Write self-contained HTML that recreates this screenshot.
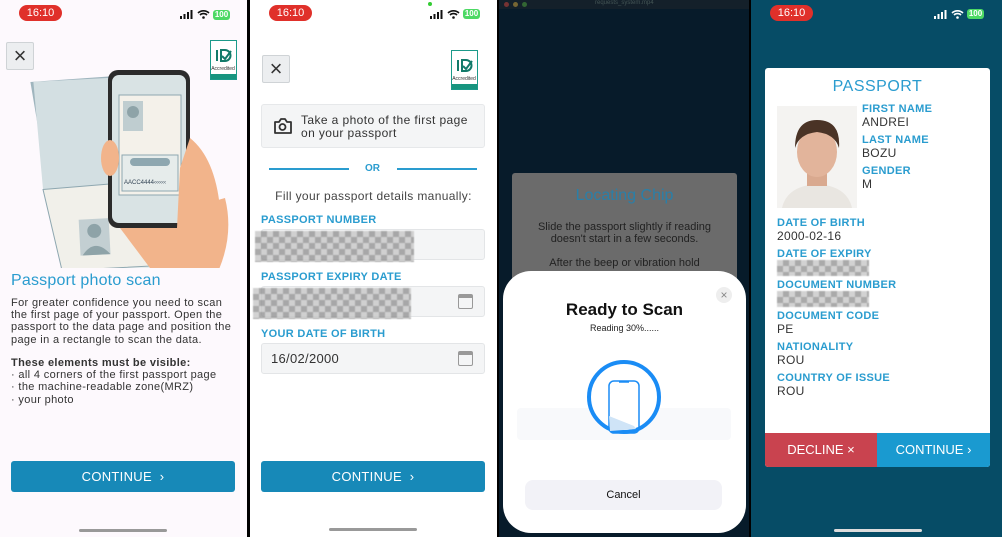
<!DOCTYPE html>
<html><head><meta charset="utf-8"><style>
*{margin:0;padding:0;box-sizing:border-box}
body{width:1002px;height:537px;overflow:hidden;background:#000;font-family:"Liberation Sans",sans-serif;position:relative}
.a{position:absolute}
.p{position:absolute;top:0;height:537px;overflow:hidden}
.time{position:absolute;left:19px;top:5px;width:43px;height:16px;border-radius:8px;background:#e0302a;color:#fff;font-size:11px;text-align:center;line-height:16px}
.bat{position:absolute;width:17px;height:10px;border-radius:3px;background:#4cd964;color:#fff;font-size:8px;font-weight:bold;text-align:center;line-height:10px}
.xbtn{position:absolute;width:28px;height:28px;background:#eceef0;border:1px solid #cfd3d6;border-radius:2px;font-size:22px;line-height:25px;text-align:center;color:#333}
.logo{position:absolute;width:27px;height:40px;border:1px solid #1b9a8a;background:#fff}
.logo .g{position:absolute;left:0;right:0;bottom:0;height:5px;background:#16957f}
.btn{position:absolute;height:31px;border-radius:3px;background:#1789b8;color:#fff;font-size:13px;text-align:center;line-height:31px;letter-spacing:.3px}
.home{position:absolute;width:88px;height:3px;border-radius:2px;background:#999}
.lbl{position:absolute;color:#2a9ccf;font-size:11px;font-weight:bold;letter-spacing:.3px}
.inp{position:absolute;left:11px;width:224px;height:31px;background:#f4f5f6;border:1px solid #e3e5e7;border-radius:3px}
.blur{position:absolute;height:31px;background:
repeating-conic-gradient(#8e8e8e 0 25%,#c4c4c4 0 50%) 0 0/12px 12px,#aaa;opacity:.75;filter:blur(.6px)}
.cal{position:absolute;right:11px;top:7px;width:15px;height:15px;border:1.5px solid #999;border-radius:2px;border-top-width:4px}
.v{position:absolute;color:#333;font-size:12px;letter-spacing:.3px}
.l4{position:absolute;color:#2a9ccf;font-size:11px;font-weight:bold;letter-spacing:.3px}
</style></head><body>

<!-- Panel 1 -->
<div class="p" style="left:0;width:247px;background:#fdf9fd">
<div class="time">16:10</div>
<svg class="a" style="left:180px;top:10px" width="14" height="9"><rect x="0" y="6" width="2" height="3" fill="#111"/><rect x="3.5" y="4" width="2" height="5" fill="#111"/><rect x="7" y="2" width="2" height="7" fill="#111"/><rect x="10.5" y="0" width="2" height="9" fill="#111"/></svg>
<svg class="a" style="left:197px;top:9px" width="13" height="10"><path d="M1 4a8 8 0 0 1 11 0M3 6a5 5 0 0 1 7 0" stroke="#111" stroke-width="1.6" fill="none"/><circle cx="6.5" cy="8.5" r="1.3" fill="#111"/></svg>
<div class="bat" style="left:213px;top:10px">100</div>
<div class="xbtn" style="left:6px;top:42px">×</div>
<div class="logo" style="left:210px;top:40px"><svg width="25" height="30"><path d="M6 9v11M10 9h4a5 5 0 0 1 0 11h-4z" stroke="#127a6a" stroke-width="2" fill="none"/><path d="M11 15l3 3 6-8" stroke="#127a6a" stroke-width="2" fill="none"/><text x="12" y="29" font-size="5" text-anchor="middle" fill="#333">Accredited</text></svg><div class="g"></div></div>
<svg class="a" style="left:30px;top:68px" width="210" height="200">
<g transform="rotate(-3 80 100)">
<path d="M5 10 L110 8 L130 220 L30 225 Z" fill="#9fb5be"/>
<path d="M8 10 L108 10 L112 115 L12 118 Z" fill="#d3dfe2"/>
<path d="M12 118 L112 115 L120 215 L30 218 Z" fill="#f1f0ea" stroke="#8ea7b0"/>
<rect x="46" y="150" width="30" height="36" fill="#c3cfd2"/>
<circle cx="61" cy="162" r="7" fill="#8ea3a8"/><path d="M48 186q13-18 28 0z" fill="#8ea3a8"/>
<rect x="63" y="200" width="60" height="24" fill="#e7eeee" stroke="#8ea7b0"/>
</g>
<path d="M195 130 q10 40 -10 80 L120 200 L90 160 Z" fill="#f2b48b"/>
<rect x="78" y="2" width="82" height="158" rx="10" fill="#2b2b2b"/>
<rect x="82" y="7" width="74" height="148" rx="7" fill="#d9e3e4"/>
<rect x="89" y="27" width="62" height="100" fill="#f4f1ea" stroke="#8ea7b0"/>
<rect x="93" y="33" width="20" height="30" fill="#bfcdd0"/>
<circle cx="103" cy="44" r="6" fill="#8ea3a8"/>
<rect x="92" y="87" width="56" height="36" fill="#e6eceb" stroke="#8ea7b0"/>
<rect x="100" y="90" width="40" height="8" rx="4" fill="#8ea7b0"/>
<text x="94" y="116" font-size="6" fill="#345">AACC4444‹‹‹‹‹‹</text>
<ellipse cx="80" cy="90" rx="9" ry="18" fill="#f2b48b"/>
<path d="M160 70 q25 20 30 70 q-20 50 -45 60 L150 100 Z" fill="#f2b48b"/>
</svg>
<div class="a" style="left:11px;top:272px;color:#2a9ccf;font-size:16px;letter-spacing:.2px">Passport photo scan</div>
<div class="a" style="left:11px;top:297px;color:#333;font-size:11px;line-height:12.2px;width:226px;letter-spacing:.35px">For greater confidence you need to scan the first page of your passport. Open the passport to the data page and position the page in a rectangle to scan the data.</div>
<div class="a" style="left:11px;top:357px;color:#333;font-size:11px;line-height:12.2px;width:236px;letter-spacing:.35px"><b>These elements must be visible:</b><br>· all 4 corners of the first passport page<br>· the machine-readable zone(MRZ)<br>· your photo</div>
<div class="btn" style="left:11px;top:461px;width:224px">CONTINUE &nbsp;›</div>
<div class="home" style="left:79px;top:529px"></div>
</div>

<!-- Panel 2 -->
<div class="p" style="left:250px;width:247px;background:#fff">
<div class="time">16:10</div>
<div class="a" style="left:178px;top:2px;width:4px;height:4px;border-radius:2px;background:#3c3"></div>
<svg class="a" style="left:180px;top:10px" width="14" height="9"><rect x="0" y="6" width="2" height="3" fill="#111"/><rect x="3.5" y="4" width="2" height="5" fill="#111"/><rect x="7" y="2" width="2" height="7" fill="#111"/><rect x="10.5" y="0" width="2" height="9" fill="#111"/></svg>
<svg class="a" style="left:197px;top:9px" width="13" height="10"><path d="M1 4a8 8 0 0 1 11 0M3 6a5 5 0 0 1 7 0" stroke="#111" stroke-width="1.6" fill="none"/><circle cx="6.5" cy="8.5" r="1.3" fill="#111"/></svg>
<div class="bat" style="left:213px;top:9px">100</div>
<div class="xbtn" style="left:12px;top:55px">×</div>
<div class="logo" style="left:201px;top:50px"><svg width="25" height="30"><path d="M6 9v11M10 9h4a5 5 0 0 1 0 11h-4z" stroke="#127a6a" stroke-width="2" fill="none"/><path d="M11 15l3 3 6-8" stroke="#127a6a" stroke-width="2" fill="none"/><text x="12" y="29" font-size="5" text-anchor="middle" fill="#333">Accredited</text></svg><div class="g"></div></div>
<div class="a" style="left:11px;top:104px;width:224px;height:44px;background:#f4f5f6;border:1px solid #e6e8ea;border-radius:3px"></div>
<svg class="a" style="left:23px;top:118px" width="19" height="16"><path d="M2 4h4l2-3h4l2 3h4v11h-16z" stroke="#333" stroke-width="1.8" fill="none" stroke-linejoin="round"/><circle cx="9.5" cy="9" r="3" stroke="#333" stroke-width="1.8" fill="none"/></svg>
<div class="a" style="left:51px;top:114px;color:#333;font-size:12px;line-height:12.5px;letter-spacing:.4px">Take a photo of the first page<br>on your passport</div>
<div class="a" style="left:19px;top:168px;width:80px;height:1.5px;background:#2a9ccf"></div>
<div class="a" style="left:147px;top:168px;width:80px;height:1.5px;background:#2a9ccf"></div>
<div class="a" style="left:115px;top:163px;color:#2a9ccf;font-size:10px;font-weight:bold">OR</div>
<div class="a" style="left:0;width:247px;top:189px;text-align:center;color:#444;font-size:12px;letter-spacing:.35px">Fill your passport details manually:</div>
<div class="lbl" style="left:11px;top:214px">PASSPORT NUMBER</div>
<div class="inp" style="top:229px"></div>
<div class="blur" style="left:5px;top:231px;width:159px"></div>
<div class="lbl" style="left:11px;top:271px">PASSPORT EXPIRY DATE</div>
<div class="inp" style="top:286px"><div class="cal"></div></div>
<div class="blur" style="left:3px;top:288px;width:158px"></div>
<div class="lbl" style="left:11px;top:328px">YOUR DATE OF BIRTH</div>
<div class="inp" style="top:343px"><div class="cal"></div><div class="a" style="left:9px;top:7px;color:#333;font-size:13px;letter-spacing:.3px">16/02/2000</div></div>
<div class="btn" style="left:11px;top:461px;width:224px">CONTINUE &nbsp;›</div>
<div class="home" style="left:79px;top:528px"></div>
</div>

<!-- Panel 3 -->
<div class="p" style="left:499px;width:250px;background:#071b2a">
<div class="a" style="left:0;top:0;width:250px;height:9px;background:#14202a"></div>
<div class="a" style="left:5px;top:2px;width:5px;height:5px;border-radius:3px;background:#733"></div>
<div class="a" style="left:14px;top:2px;width:5px;height:5px;border-radius:3px;background:#763"></div>
<div class="a" style="left:23px;top:2px;width:5px;height:5px;border-radius:3px;background:#363"></div>
<div class="a" style="left:96px;top:0;color:#455;font-size:6px">requests_system.mp4</div>
<div class="a" style="left:13px;top:173px;width:225px;height:120px;background:#6b6b6b;border-radius:3px">
<div class="a" style="left:0;width:225px;top:14px;text-align:center;color:#2a7fa8;font-size:16px">Locating Chip</div>
<div class="a" style="left:10px;width:205px;top:48px;text-align:center;color:#222;font-size:11px;line-height:12px">Slide the passport slightly if reading doesn't start in a few seconds.<br><br>After the beep or vibration hold</div>
</div>
<div class="a" style="left:4px;top:271px;width:243px;height:262px;background:#fff;border-radius:28px"></div>
<div class="a" style="left:217px;top:287px;width:16px;height:16px;border-radius:8px;background:#eee;color:#888;font-size:12px;line-height:16px;text-align:center">×</div>
<div class="a" style="left:4px;width:243px;top:300px;text-align:center;color:#111;font-size:17px;font-weight:bold">Ready to Scan</div>
<div class="a" style="left:4px;width:243px;top:323px;text-align:center;color:#222;font-size:9px">Reading 30%......</div>
<div class="a" style="left:18px;top:408px;width:214px;height:32px;background:#f8f9fb;border-radius:4px"></div>
<svg class="a" style="left:87px;top:359px" width="76" height="76"><circle cx="38" cy="38" r="35" stroke="#1a8cf5" stroke-width="4" fill="#fff"/><rect x="23" y="22" width="30" height="52" rx="5" stroke="#1a8cf5" stroke-width="1.5" fill="none"/><path d="M23 57 L48 67 L50 70 L24 72 Z" fill="#cfe4f7"/><path d="M33 23h10" stroke="#1a8cf5" stroke-width="1.5"/></svg>
<div class="a" style="left:26px;top:480px;width:197px;height:30px;background:#f2f2f7;border-radius:8px;text-align:center;line-height:30px;font-size:11px;color:#111">Cancel</div>
</div>

<!-- Panel 4 -->
<div class="p" style="left:751px;width:251px;background:#064c66">
<div class="time">16:10</div>
<svg class="a" style="left:183px;top:10px" width="14" height="9"><rect x="0" y="6" width="2" height="3" fill="#fff"/><rect x="3.5" y="4" width="2" height="5" fill="#fff"/><rect x="7" y="2" width="2" height="7" fill="#fff"/><rect x="10.5" y="0" width="2" height="9" fill="#fff"/></svg>
<svg class="a" style="left:200px;top:9px" width="13" height="10"><path d="M1 4a8 8 0 0 1 11 0M3 6a5 5 0 0 1 7 0" stroke="#fff" stroke-width="1.6" fill="none"/><circle cx="6.5" cy="8.5" r="1.3" fill="#fff"/></svg>
<div class="bat" style="left:216px;top:9px">100</div>
<div class="a" style="left:14px;top:68px;width:225px;height:399px;background:#fff;border-radius:3px;overflow:hidden">
<div class="a" style="left:0;width:225px;top:10px;text-align:center;color:#2a9ccf;font-size:16px;letter-spacing:.5px">PASSPORT</div>
<svg class="a" style="left:12px;top:38px" width="80" height="102"><rect width="80" height="102" fill="#f4f3f1"/><path d="M5 102 q5-22 35-24 q30 2 35 24z" fill="#e9e6e1"/><rect x="30" y="60" width="20" height="20" fill="#d9a98f"/><ellipse cx="40" cy="46" rx="20" ry="25" fill="#e2b49b"/><path d="M18 42 q0-28 22-28 q24 0 22 28 q-4-14 -22-16 q-18 2 -22 16z" fill="#4a3326"/></svg>
<div class="l4" style="left:97px;top:35px">FIRST NAME</div><div class="v" style="left:97px;top:47px">ANDREI</div>
<div class="l4" style="left:97px;top:66px">LAST NAME</div><div class="v" style="left:97px;top:78px">BOZU</div>
<div class="l4" style="left:97px;top:97px">GENDER</div><div class="v" style="left:97px;top:109px">M</div>
<div class="l4" style="left:12px;top:149px">DATE OF BIRTH</div><div class="v" style="left:12px;top:161px">2000-02-16</div>
<div class="l4" style="left:12px;top:180px">DATE OF EXPIRY</div><div class="blur" style="left:12px;top:192px;width:92px;height:16px"></div>
<div class="l4" style="left:12px;top:211px">DOCUMENT NUMBER</div><div class="blur" style="left:12px;top:223px;width:92px;height:16px"></div>
<div class="l4" style="left:12px;top:242px">DOCUMENT CODE</div><div class="v" style="left:12px;top:254px">PE</div>
<div class="l4" style="left:12px;top:273px">NATIONALITY</div><div class="v" style="left:12px;top:285px">ROU</div>
<div class="l4" style="left:12px;top:304px">COUNTRY OF ISSUE</div><div class="v" style="left:12px;top:316px">ROU</div>
<div class="a" style="left:0;top:365px;width:112px;height:34px;background:#c9434f;color:#fff;font-size:13px;text-align:center;line-height:34px">DECLINE ×</div>
<div class="a" style="left:112px;top:365px;width:113px;height:34px;background:#1a9ad0;color:#fff;font-size:13px;text-align:center;line-height:34px">CONTINUE ›</div>
</div>
<div class="home" style="left:83px;top:529px;background:#ddd"></div>
</div>
</body></html>
